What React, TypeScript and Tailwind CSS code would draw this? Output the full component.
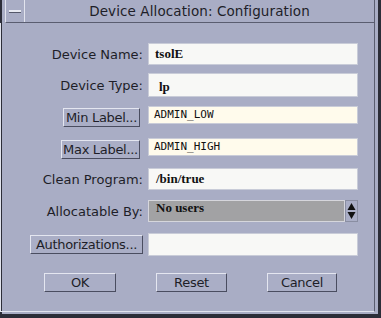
import React from 'react';

const sans = "font-['DejaVu_Sans',sans-serif]";
const labelCls = `${sans} text-[13px] text-[#1e1e28] text-right pr-[1px] leading-none whitespace-nowrap`;
const btnCls = `${sans} text-[13px] tracking-[-0.3px] text-[#1e1e28] leading-none whitespace-nowrap shrink-0 bg-[#aaaec6] border border-t-[#e4e6f0] border-l-[#e4e6f0] border-b-[#4a4d60] border-r-[#4a4d60] flex items-center justify-center`;
const fieldCls = 'w-[210px] ml-[4px] flex items-center border border-[#c9ccd8]';

function Row({ label, children, h = 24, mt }: { label: React.ReactNode; children: React.ReactNode; h?: number; mt: string }) {
  return (
    <div className={`flex items-center ${mt}`} style={{ height: h }}>
      <div className="w-[143px] flex justify-end items-center">{label}</div>
      {children}
    </div>
  );
}

export default function App() {
  return (
    <div className="w-[381px] h-[318px] bg-[#a9adc5] border-l-2 border-r-[3px] border-b-[4px] border-[#2c2d38] flex flex-col">
      {/* Title bar */}
      <div className="h-[23px] flex border-b border-[#5a5d70] mx-[3px] border-l border-r border-l-[#e2e4ee] border-r-[#5a5d70]">
        <div className="w-[19px] flex items-center justify-center border-r border-[#e2e4ee]">
          <div className="w-[12px] h-[3px] bg-[#e8eaf2] border-b border-[#55586a]" />
        </div>
        <div className={`flex-1 flex items-center justify-center ${sans} text-[13.5px] text-[#1e1e28] tracking-[0.1px]`}>
          Device Allocation: Configuration
        </div>
      </div>

      <div className="flex-1 mx-[3px] border-l border-r border-l-[#e2e4ee] border-r-[#5a5d70] border-b border-b-[#e2e4ee] mb-[2px] flex flex-col -ml-[2px]">
        <Row mt="mt-[19px]" label={<span className={labelCls}>Device Name:</span>}>
          <div className={`${fieldCls} bg-[#f8f8f6] pl-[6px]`}>
            <span className="font-['Liberation_Serif',serif] font-bold text-[13px] text-[#111]">tsolE</span>
          </div>
        </Row>
        <Row mt="mt-[7px]" label={<span className={labelCls}>Device Type:</span>}>
          <div className={`${fieldCls} bg-[#f8f8f6] pl-[10px] items-start pt-[3px]`}>
            <span className="font-['Liberation_Serif',serif] font-bold text-[13px] text-[#111]">lp</span>
          </div>
        </Row>
        <Row mt="mt-[6px]" label={<div className={`${btnCls} w-[77px] h-[19px] mr-[4px] mt-[4px]`}>Min Label...</div>}>
          <div className={`${fieldCls} bg-[#fffbec] pl-[5px]`}>
            <span className="font-['DejaVu_Sans_Mono',monospace] text-[11px] text-[#111]">ADMIN_LOW</span>
          </div>
        </Row>
        <Row mt="mt-[8px]" label={<div className={`${btnCls} w-[79px] h-[19px] mr-[4px] mt-[4px]`}>Max Label...</div>}>
          <div className={`${fieldCls} bg-[#fffbec] pl-[5px]`}>
            <span className="font-['DejaVu_Sans_Mono',monospace] text-[11px] text-[#111]">ADMIN_HIGH</span>
          </div>
        </Row>
        <Row mt="mt-[8px]" label={<span className={labelCls}>Clean Program:</span>}>
          <div className={`${fieldCls} bg-[#f8f8f6] pl-[7px]`}>
            <span className="font-['Liberation_Serif',serif] font-bold text-[13px] text-[#111]">/bin/true</span>
          </div>
        </Row>
        <Row mt="mt-[9px]" h={22} label={<span className={labelCls}>Allocatable By:</span>}>
          <div className="w-[210px] ml-[4px] h-full flex">
            <div className="flex-1 bg-[#a2a2a4] border border-[#d6d6dc] pl-[7px] flex items-start">
              <span className="font-['Liberation_Serif',serif] font-bold text-[13px] text-[#111] leading-none">No users</span>
            </div>
            <div className="w-[13px] flex flex-col items-center justify-center bg-[#aaaec6] border border-[#8a8ea2]">
              <svg width="9" height="18" viewBox="0 0 9 18">
                <path d="M4.5 1 L8.5 8 L0.5 8 Z" fill="#111" />
                <path d="M0.5 10 L8.5 10 L4.5 17 Z" fill="#111" />
              </svg>
            </div>
          </div>
        </Row>
        <Row mt="mt-[11px]" h={23} label={<div className={`${btnCls} w-[113px] h-[19px] mr-[1px]`}>Authorizations...</div>}>
          <div className={`${fieldCls} bg-[#f8f8f6] h-full`} />
        </Row>

        <div className="flex mt-[17px] h-[19px]">
          <div className={`${btnCls} ml-[43px] w-[72px] h-[19px]`}>OK</div>
          <div className={`${btnCls} ml-[40px] w-[71px] h-[19px]`}>Reset</div>
          <div className={`${btnCls} ml-[40px] w-[70px] h-[19px]`}>Cancel</div>
        </div>
      </div>
    </div>
  );
}
